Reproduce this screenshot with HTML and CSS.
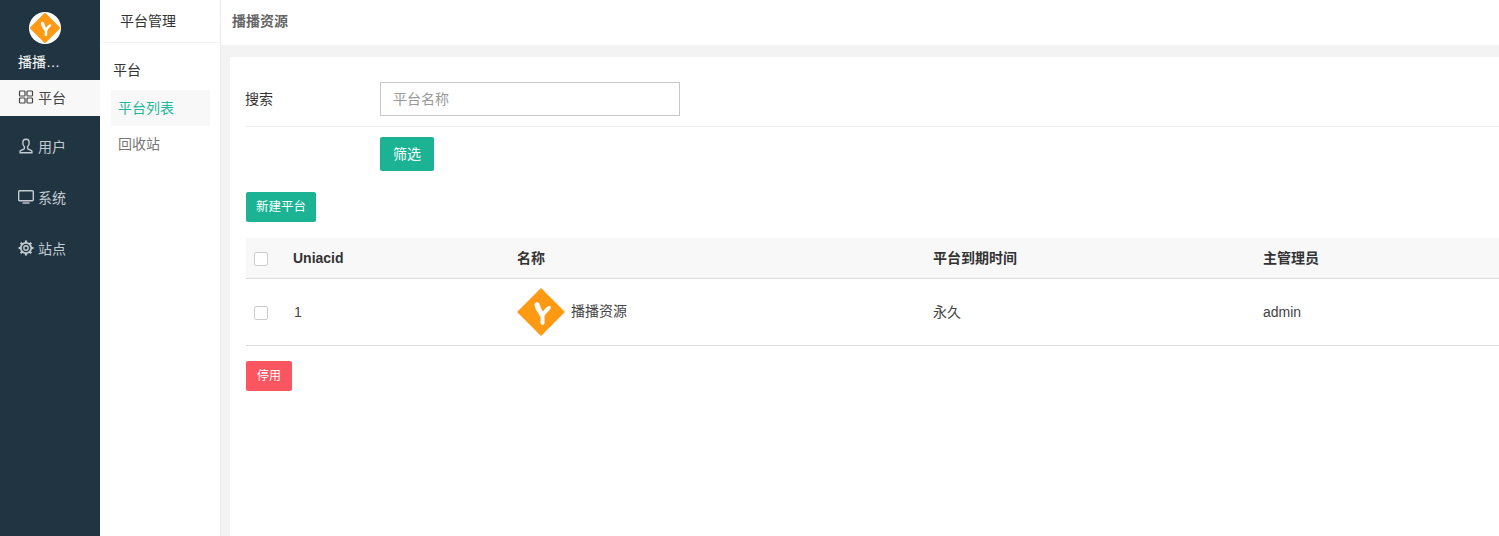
FILE: index.html
```html
<!DOCTYPE html>
<html lang="zh-CN">
<head>
<meta charset="utf-8">
<title>播播资源</title>
<link rel="stylesheet" href="styles.css">
</head>
<body>
<div class="app">
  <aside class="rail">
    <div class="brand">
      <svg class="brand-logo" viewBox="0 0 50 50" width="32" height="32">
        <circle cx="25" cy="25" r="25" fill="#fff"/>
        <path d="M25 3 47 25 25 47 3 25Z" fill="#ff9a12" stroke="#ff9a12" stroke-width="3" stroke-linejoin="round"/>
        <path d="M18.5 17C19.5 14.5 22.5 14.5 23.5 17 24.5 20 25.5 23 27 24.5 29 22 30 20.5 32 19.5 34 18.5 35.5 19.5 34.5 21.5 32.5 25 28.5 27 28.5 30V36C28.5 38.5 24.5 38.5 24.5 36V30C22.5 26 18.5 22 18.5 17Z" fill="#fff"/>
      </svg>
      <div class="brand-name">播播…</div>
    </div>
    <nav class="rail-nav">
      <a class="rail-item active">
        <svg class="rail-icon" viewBox="0 0 16 16" width="16" height="16"><g fill="none" stroke="currentColor" stroke-width="1.2"><rect x="1.5" y="2" width="5.5" height="5" rx=".8"/><rect x="9" y="2" width="5.5" height="5" rx=".8"/><rect x="1.5" y="9" width="5.5" height="5" rx=".8"/><rect x="9" y="9" width="5.5" height="5" rx=".8"/></g></svg>
        <span>平台</span>
      </a>
      <a class="rail-item rail-user">
        <svg class="rail-icon" viewBox="0 0 16 16" width="16" height="16"><path d="M8 1.2C6 1.2 4.8 2.7 4.8 4.8c0 1.7.6 3 1.6 3.9v1.9c0 .8-3.8 1.500-4.300 2.500v1.600h11.800v-1.600c-.5-1-4.300-1.700-4.300-2.500V8.700c1-.9 1.600-2.200 1.600-3.900 0-2.100-1.200-3.600-3.200-3.600Z" fill="none" stroke="currentColor" stroke-width="1.4"/></svg>
        <span>用户</span>
      </a>
      <a class="rail-item">
        <svg class="rail-icon" viewBox="0 0 16 16" width="16" height="16"><rect x="0.7" y="1.7" width="14.6" height="10" rx="1" fill="none" stroke="currentColor" stroke-width="1.4"/><path d="M4.5 14h7" stroke="currentColor" stroke-width="1.4"/></svg>
        <span>系统</span>
      </a>
      <a class="rail-item rail-site">
        <svg class="rail-icon" viewBox="0 0 16 16" width="16" height="16"><circle cx="8" cy="8" r="2.2" fill="none" stroke="currentColor" stroke-width="1.4"/><circle cx="8" cy="8" r="5.2" fill="none" stroke="currentColor" stroke-width="1.8"/><path d="M8 .5v2.500M8 13v2.500M.5 8H3M13 8h2.500M2.700 2.700l1.800 1.800M11.500 11.500l1.800 1.800M2.700 13.300l1.800-1.800M11.500 4.500l1.800-1.800" stroke="currentColor" stroke-width="2.2"/></svg>
        <span>站点</span>
      </a>
    </nav>
  </aside>

  <aside class="subnav">
    <div class="subnav-title">平台管理</div>
    <div class="subnav-group">平台</div>
    <a class="subnav-item current">平台列表</a>
    <a class="subnav-item">回收站</a>
  </aside>

  <div class="main">
    <header class="topbar">播播资源</header>
    <main class="stage">
      <section class="card">
        <form class="filter">
          <div class="filter-row">
            <label class="filter-label" for="kw">搜索</label>
            <input class="filter-input" id="kw" type="text" placeholder="平台名称">
          </div>
          <div class="filter-actions">
            <button class="btn btn-green btn-filter" type="button">筛选</button>
          </div>
        </form>
        <button class="btn btn-green btn-new" type="button">新建平台</button>
        <div class="table">
          <div class="tr thead">
            <div class="c-check"><span class="checkbox"></span></div>
            <div class="c-id">Uniacid</div>
            <div class="c-name">名称</div>
            <div class="c-exp">平台到期时间</div>
            <div class="c-admin">主管理员</div>
          </div>
          <div class="tr tbody">
            <div class="c-check"><span class="checkbox"></span></div>
            <div class="c-id">1</div>
            <div class="c-name name-cell">
              <svg class="row-logo" viewBox="0 0 50 50" width="50" height="50">
                <path d="M25 1 49 25 25 49 1 25Z" fill="#ff9a12"/>
                <path d="M18.5 17C19.5 14.5 22.5 14.5 23.5 17 24.5 20 25.5 23 27 24.5 29 22 30 20.5 32 19.5 34 18.5 35.5 19.5 34.5 21.5 32.5 25 28.5 27 28.5 30V36C28.5 38.5 24.5 38.5 24.5 36V30C22.5 26 18.5 22 18.5 17Z" fill="#fff"/>
              </svg>
              <span class="name-text">播播资源</span>
            </div>
            <div class="c-exp">永久</div>
            <div class="c-admin">admin</div>
          </div>
        </div>
        <button class="btn btn-red" type="button">停用</button>
      </section>
    </main>
  </div>
</div>
</body>
</html>
```
FILE: styles.css
```css
* { box-sizing: border-box; }
html, body { margin: 0; height: 100%; overflow: hidden; }
body {
  font-family: "Liberation Sans", "Noto Sans CJK SC", sans-serif;
  font-size: 14px;
  color: #333;
  background: #fff;
}
.app { display: flex; height: 536px; }

.rail { width: 100px; flex: none; background: #203442; }
.brand { height: 80px; padding-top: 12px; }
.brand-logo { display: block; margin-left: 29px; }
.brand-name { margin-top: 9px; padding-left: 18px; color: #fff; font-size: 14px; line-height: 18px; }
.rail-nav { display: flex; flex-direction: column; gap: 14px; }
.rail-item {
  height: 36px;
  display: flex;
  align-items: center;
  gap: 4px;
  padding: 0 0 2px 18px;
  color: #c4ccd1;
  font-size: 14px;
}
.rail-item.active { background: #f8f8f8; color: #444; }
.rail-item.rail-user { padding-bottom: 4px; }
.rail-item.rail-site { padding-bottom: 0; }
.rail-icon { flex: none; }

.subnav { width: 121px; flex: none; border-right: 1px solid #eaeaea; background: #fff; }
.subnav-title { height: 43px; padding-left: 20px; line-height: 43px; font-size: 14px; color: #333; border-bottom: 1px solid #f4f4f4; }
.subnav-group { padding: 17px 0 0 13px; height: 47px; line-height: 20px; font-size: 14px; color: #333; }
.subnav-item { display: block; width: 99px; height: 36px; margin-left: 11px; padding-left: 7px; line-height: 36px; font-size: 14px; color: #777; }
.subnav-item.current { background: #f8f8f8; color: #1fb89b; }

.main { flex: 1; min-width: 0; display: flex; flex-direction: column; }
.topbar { height: 46px; padding-left: 11px; line-height: 42px; font-size: 14px; font-weight: bold; color: #666; border-bottom: 1px solid #f3f3f3; }
.stage { flex: 1; background: #f3f3f3; padding: 11px 0 0 9px; }
.card { height: 100%; background: #fff; padding: 25px 0 0 16px; }

.filter { margin-left: -1px; }
.filter-row { display: flex; align-items: flex-start; height: 45px; border-bottom: 1px solid #f0f0f0; }
.filter-label { width: 135px; line-height: 34px; font-size: 14px; color: #333; }
.filter-input { width: 300px; height: 34px; border: 1px solid #c8c8c8; padding: 0 12px; font: inherit; font-size: 14px; outline: none; color: #333; }
.filter-input::placeholder { color: #999; }
.filter-actions { padding: 10px 0 0 135px; }

.btn { display: block; border: 0; border-radius: 2px; color: #fff; font-family: inherit; padding: 0; line-height: 1; }
.btn-green { background: #1cb394; }
.btn-filter { width: 54px; height: 34px; font-size: 14px; }
.btn-new { width: 70px; height: 30px; margin-top: 21px; font-size: 12.5px; }
.btn-red { width: 46px; height: 30px; margin-top: 15px; background: #fb5660; font-size: 12px; }

.table { margin-top: 16px; }
.tr { display: grid; grid-template-columns: 47px 224px 416px 330px 1fr; align-items: center; }
.thead { height: 41px; padding-bottom: 2px; background: #f8f8f8; border-bottom: 1px solid #ddd; font-weight: bold; color: #333; }
.tbody { height: 67px; border-bottom: 1px solid #ddd; color: #444; }
.c-check { padding-left: 8px; display: flex; }
.thead .c-check { padding-top: 3px; }
.thead .c-id { padding-top: 2px; }
.tbody .c-check { margin-top: 1px; }
.tbody .c-id { padding-left: 1px; }
.tbody .c-exp { margin-bottom: 2px; }
.checkbox { width: 14px; height: 14px; border: 1px solid #ccc; border-radius: 2px; background: #fff; }
.name-cell { display: flex; align-items: center; gap: 5px; margin-left: -1px; }
.name-text { margin-bottom: 5px; }
.row-logo { flex: none; }
```
